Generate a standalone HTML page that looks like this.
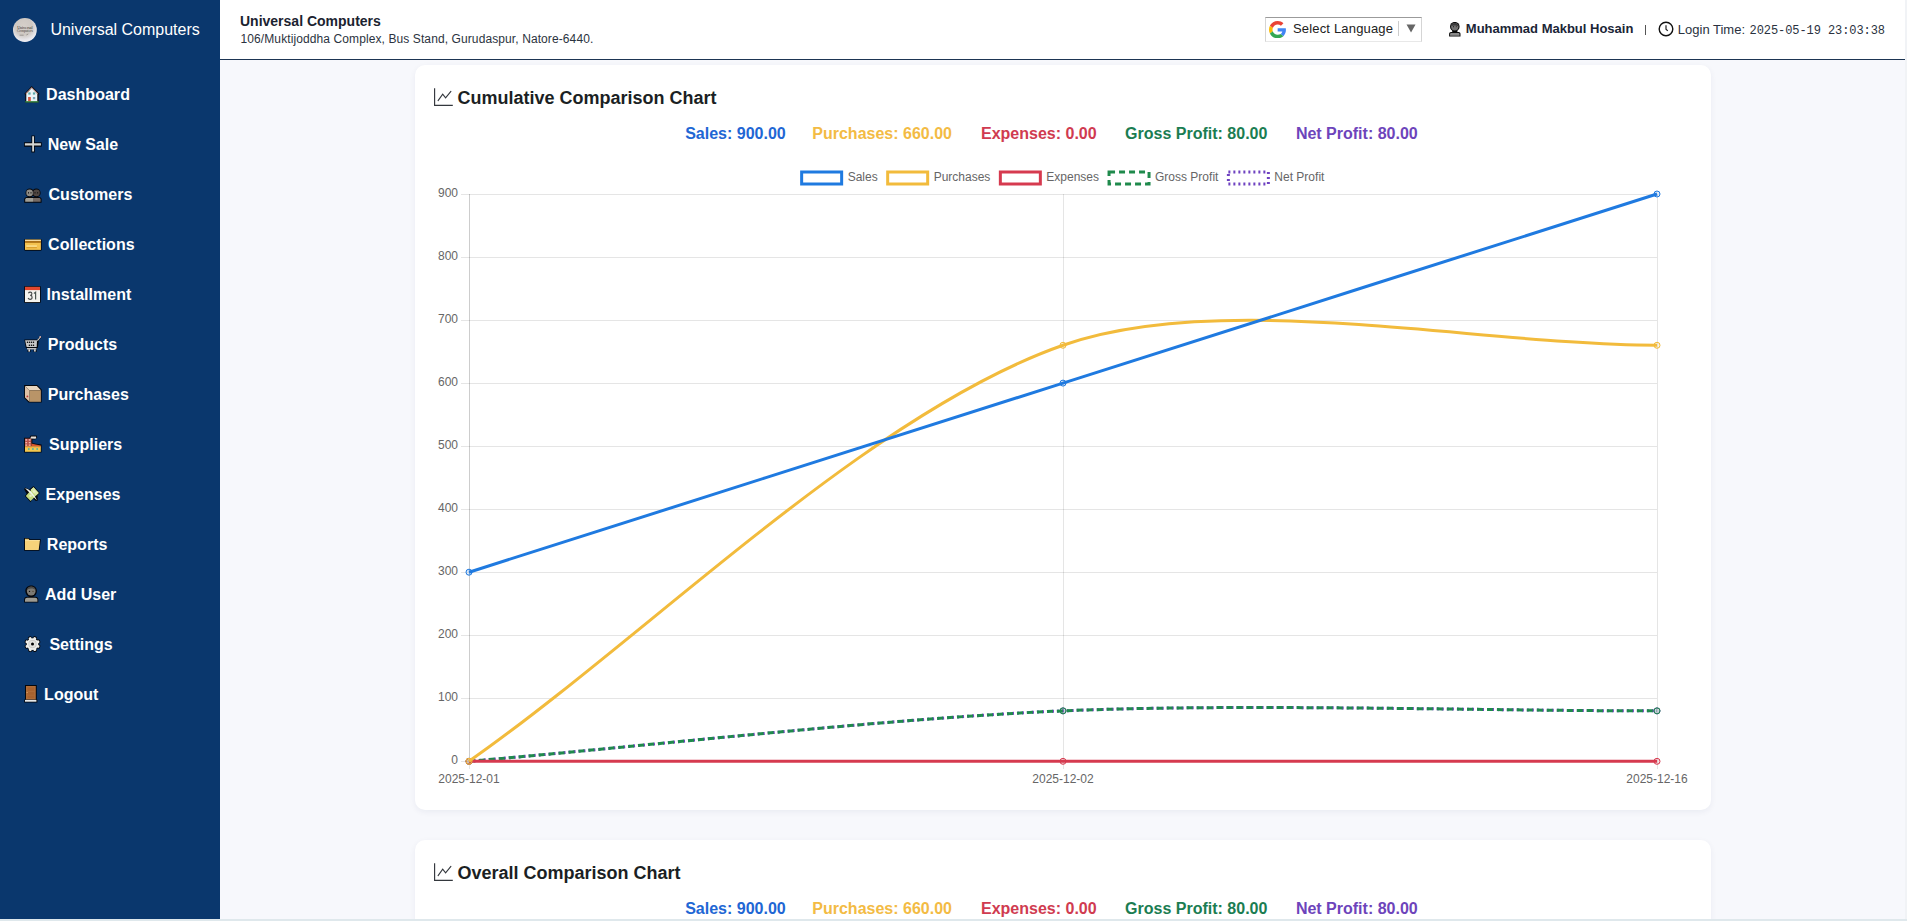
<!DOCTYPE html>
<html><head><meta charset="utf-8">
<style>
*{box-sizing:border-box;margin:0;padding:0}
html,body{width:1907px;height:921px;overflow:hidden;background:#f1f3f6;font-family:"Liberation Sans",sans-serif}
#page{position:absolute;left:0;top:0;width:1905px;height:919px;background:#f7f8fc;overflow:hidden}
#side{position:absolute;left:0;top:0;width:220px;height:919px;background:#0a376d}
.t{position:absolute;white-space:nowrap;line-height:1}
.nav{font-size:16px;font-weight:bold;color:#fff;letter-spacing:0.03px}
.ic{position:absolute}
#hdr{position:absolute;left:220px;top:0;width:1685px;height:59px;background:#fff}
#hline{position:absolute;left:220px;top:59px;width:1685px;height:1px;background:#1d3553}
.card{position:absolute;left:415px;width:1296px;background:#fff;border-radius:10px;box-shadow:0 2px 6px rgba(20,40,80,0.06)}
.stat{font-size:16px;font-weight:bold}
</style></head><body>
<div style="position:absolute;left:0;top:919px;width:1907px;height:2px;background:#dfe8ec"></div>
<div id="page">
<div id="side">
  <!-- logo -->
  <svg class="ic" style="left:12px;top:17px" width="26" height="26" viewBox="0 0 26 26">
<defs><radialGradient id="lg" cx="45%" cy="35%" r="65%"><stop offset="0" stop-color="#d6d0ca"/><stop offset="0.55" stop-color="#cec8c3"/><stop offset="0.85" stop-color="#e6e4e8"/><stop offset="1" stop-color="#f0f0f5"/></radialGradient></defs>
<circle cx="12.9" cy="13" r="11.9" fill="url(#lg)"/>
<text x="12.9" y="11.6" text-anchor="middle" font-family="Liberation Serif" font-size="4.6" fill="#2e2a26" textLength="15.5" lengthAdjust="spacingAndGlyphs">Universal</text>
<text x="12.9" y="14.6" text-anchor="middle" font-family="Liberation Serif" font-size="4" fill="#4a443e" textLength="16" lengthAdjust="spacingAndGlyphs">Computers</text>
<path d="M7.6 18.2h4M14.4 18l1.8-1" stroke="#6a645e" stroke-width="0.5"/>
</svg>
  <div class="t" style="left:50.4px;top:21.5px;font-size:16px;color:#fff">Universal Computers</div>

  <svg class="ic" style="left:20px;top:82px" width="25" height="25" viewBox="0 0 25 25"><path d="M4.2 11.9 L11.7 4.0 L19.6 11.9 L18.6 12.4 V20.5 H5.3 V12.4 Z" fill="#0b0b10"/>
<path d="M6.3 11.9 L11.7 6.1 L17.3 11.9 V19.4 H6.3 Z" fill="#eaf4f6"/>
<path d="M5.6 11.6 L11.7 5.2 L17.9 11.6 L17.3 11.9 L11.7 6.1 L6.3 11.9Z" fill="#f2b6a8"/>
<rect x="8.3" y="10.4" width="2.3" height="2.2" fill="#5ea9a8"/><rect x="12.9" y="10.4" width="2.3" height="2.2" fill="#5ea9a8"/><rect x="12.9" y="15" width="2.3" height="2.2" fill="#7aa6b9"/>
<rect x="8.1" y="15" width="2.7" height="4.4" fill="#d55640"/>
<rect x="5.3" y="19.2" width="13.3" height="1.3" fill="#3d8f44"/></svg>
<svg class="ic" style="left:20px;top:132px" width="25" height="25" viewBox="0 0 25 25"><path d="M11.4 3.5H14.8V10.2H21.7V14.8H14.8V20.4H11.4V14.8H4.1V10.2H11.4Z" fill="#05070c"/>
<path d="M12.2 4.3H14V11.2H20.9V13.6H14V19.6H12.2V13.6H4.9V11.2H12.2Z" fill="#d5d6d2"/></svg>
<svg class="ic" style="left:20px;top:182px" width="25" height="25" viewBox="0 0 25 25"><circle cx="9.8" cy="10.9" r="4.3" fill="#05070c"/><circle cx="16.3" cy="10.9" r="4.3" fill="#05070c"/>
<path d="M4.2 20.7V17.5C4.2 15.9 5.5 15 7 15H19C20.6 15 21.6 15.9 21.6 17.5V20.7Z" fill="#05070c"/>
<circle cx="9.6" cy="10.9" r="3.3" fill="#8f8c86"/><circle cx="16.5" cy="10.9" r="3.3" fill="#4f4642"/>
<rect x="8.2" y="10" width="0.8" height="1.6" fill="#111"/><rect x="10.6" y="10" width="0.8" height="1.6" fill="#111"/><rect x="14.6" y="10" width="0.8" height="1.6" fill="#111"/><rect x="17.3" y="10" width="0.8" height="1.6" fill="#111"/>
<path d="M5.2 19.8V17.6C5.2 16.6 5.9 15.9 7 15.9H13V19.8Z" fill="#a19f96"/><path d="M13 15.9H19C20 15.9 20.6 16.6 20.6 17.6V19.8H13Z" fill="#756a64"/></svg>
<svg class="ic" style="left:20px;top:232px" width="25" height="25" viewBox="0 0 25 25"><rect x="4.2" y="6.9" width="17.5" height="11.8" rx="1.2" fill="#05070c"/>
<rect x="5" y="7.7" width="15.9" height="10.2" fill="#f4c24f"/>
<rect x="5" y="7.7" width="15.9" height="1.4" fill="#f5d9a0"/>
<rect x="5" y="9.1" width="15.9" height="1.7" fill="#a66a12"/>
<rect x="6.4" y="13.4" width="10.5" height="1.3" fill="#fbe39a"/>
<rect x="6.4" y="15.2" width="10.5" height="1" fill="#d69a2a"/></svg>
<svg class="ic" style="left:20px;top:282px" width="25" height="25" viewBox="0 0 25 25"><rect x="4.2" y="4.1" width="16.6" height="16.8" rx="0.8" fill="#05070c"/>
<rect x="5" y="4.9" width="15" height="15.2" fill="#f4f3ee"/>
<rect x="5" y="4.9" width="15" height="3.2" fill="#e2472e"/>
<path d="M8.4 11.2C8.8 10.4 9.5 10.1 10.2 10.1C11.2 10.1 11.9 10.7 11.9 11.7C11.9 12.6 11.2 13.2 10.2 13.3C11.3 13.3 12.1 14 12.1 15.2C12.1 16.5 11.2 17.3 10.1 17.3C9.2 17.3 8.5 16.9 8.1 16.1" fill="none" stroke="#4b4d4c" stroke-width="1.15"/><path d="M13.9 11.4L15.6 10.1V17.6" fill="none" stroke="#4b5550" stroke-width="1.2"/></svg>
<svg class="ic" style="left:20px;top:332px" width="25" height="25" viewBox="0 0 25 25"><path d="M4.3 7.4H17.6L19.8 4.0L21.4 5.2L18.8 8.6L17.9 15.6L16.6 16.4V19.9H13.6V17.2H10.6V19.9H7.6V16.6L5.8 15.7Z" fill="#05070c"/>
<path d="M5.1 8.3H17.0L16.7 15.1H6.6Z" fill="#c9c9c9"/>
<path d="M17.0 8.3L19.9 4.9L20.6 5.4L17.8 8.9Z" fill="#d8d8d8"/>
<circle cx="20.2" cy="4.9" r="0.9" fill="#e8b6b0"/>
<rect x="7" y="16.1" width="9.4" height="1.3" fill="#d5d5d5"/><rect x="8.4" y="17.3" width="1.6" height="2.3" fill="#e4e4e4"/><rect x="14.1" y="17.3" width="1.6" height="2.3" fill="#e4e4e4"/>
<circle cx="7.5" cy="10.3" r="0.75" fill="#000"/><circle cx="9.5" cy="10.3" r="0.75" fill="#000"/><circle cx="11.5" cy="10.3" r="0.75" fill="#000"/><circle cx="13.5" cy="10.3" r="0.75" fill="#000"/>
<circle cx="9.4" cy="13.2" r="0.75" fill="#000"/><circle cx="11.5" cy="13.2" r="0.75" fill="#000"/><circle cx="13.5" cy="13.2" r="0.75" fill="#000"/></svg>
<svg class="ic" style="left:20px;top:382px" width="25" height="25" viewBox="0 0 25 25"><path d="M4.1 3.1H17.2L21.7 7.6V20.6H8.6L4.1 16.1Z" fill="#05070c"/>
<path d="M5 4H16.8L20.9 8.3H9.4Z" fill="#e9d6bf"/>
<path d="M9.4 8.3H20.9V19.8H9.4Z" fill="#b99468"/>
<path d="M5 4L9.4 8.3V19.8L5 15.6Z" fill="#dcc0a6"/>
<circle cx="7.4" cy="14.4" r="0.9" fill="#c0393a"/></svg>
<svg class="ic" style="left:20px;top:432px" width="25" height="25" viewBox="0 0 25 25"><path d="M4.1 5.8H9.6L10.6 3.6H16.6L17.2 5.6L15.2 7.6L12.4 7.4V11.1L16 11.7L21.6 12.6V20.6H4.1Z" fill="#05070c"/>
<rect x="5" y="6.6" width="6.4" height="8" fill="#b75048"/>
<rect x="5.4" y="7" width="1.7" height="1.8" fill="#e8a4a0"/><rect x="8.8" y="7" width="1.7" height="1.8" fill="#e8a4a0"/>
<rect x="5.4" y="10" width="1.7" height="1.3" fill="#f2b6aa"/><rect x="8.8" y="10" width="1.7" height="1.3" fill="#f2b6aa"/>
<rect x="5.4" y="12.4" width="1.7" height="1.4" fill="#f2b6aa"/><rect x="8.8" y="12.4" width="1.7" height="1.4" fill="#f2b6aa"/>
<path d="M10.2 6.6L11.2 4.4H16L16.2 6.0L15.4 6.7Z" fill="#e6e0da"/>
<path d="M11.4 11.6L15.6 12.6L20.8 13.6V14.6H11.4Z" fill="#d9582e"/>
<rect x="5" y="14.5" width="15.8" height="5.3" fill="#f3c750"/>
<rect x="5" y="14.5" width="15.8" height="1" fill="#f0a040"/>
<circle cx="8.8" cy="17" r="0.95" fill="#55b39e"/><circle cx="12.9" cy="17" r="0.95" fill="#55b39e"/><circle cx="17.2" cy="17" r="0.95" fill="#55b39e"/></svg>
<svg class="ic" style="left:20px;top:482px" width="25" height="25" viewBox="0 0 25 25"><path d="M13.5 4L19.8 11L17.5 13.2L17.8 18.6L15.8 19L12.8 16.6L10.6 20.2L4.8 14L6.7 12L4.1 7.2L5.2 5.5L9.2 7.4Z" fill="#05070c"/>
<path d="M13.5 5.2L18.7 10.9L10.6 19L5.8 14Z" fill="#c4da80"/>
<path d="M10.6 7.8L13.5 5.2L18.7 10.9L15.8 13.6Z" fill="#dbe9a6"/>
<path d="M5 6.2C7.5 6.5 9.6 7.8 11.6 10.2C13.4 12.4 15.2 14.8 17 18.2C15 16.6 13.3 14.6 11.2 12.3C9.1 10.1 7.3 8.4 5 6.2Z" fill="#f2f4ee"/>
<circle cx="14.2" cy="9.6" r="1.3" fill="#e9efc6"/><circle cx="10.6" cy="13.8" r="1.3" fill="#e9efc6"/></svg>
<svg class="ic" style="left:20px;top:532px" width="25" height="25" viewBox="0 0 25 25"><path d="M4.1 6.2C4.1 5.9 4.4 5.9 4.6 5.9H9L10 7.2H20.9L19.4 18.8H4.1Z" fill="#05070c"/>
<path d="M5 6.8H8.6L9.4 8H5Z" fill="#e8c877"/>
<path d="M5 8H19.9L18.7 18H5Z" fill="#f6d27a"/>
<rect x="5" y="8" width="14.8" height="0.8" fill="#fbe3a2"/></svg>
<svg class="ic" style="left:20px;top:582px" width="25" height="25" viewBox="0 0 25 25"><path d="M11.2 3.4C14.5 3.4 16.9 5.7 16.9 9C16.9 11.9 15.2 14.1 13 14.8H15.4C17.2 14.8 18.3 16.1 18.3 17.6V20.6H4.1V17.6C4.1 16.1 5.3 14.8 7 14.8H9.4C7.2 14.1 5.3 11.9 5.3 9C5.3 5.7 7.8 3.4 11.2 3.4Z" fill="#05070c"/>
<circle cx="11.2" cy="9.1" r="4.4" fill="#7d7a74"/>
<path d="M6.6 8.6C6.8 6 8.6 4.4 11.2 4.4C13.6 4.4 15.6 6 15.8 8.4C14.6 7.2 12.8 6.5 11 6.6C9.2 6.6 7.6 7.4 6.6 8.6Z" fill="#4a4845"/>
<circle cx="9.5" cy="9.4" r="0.7" fill="#111"/><circle cx="13" cy="9.4" r="0.7" fill="#5a4a36"/>
<path d="M5 19.8V17.7C5 16.5 5.9 15.7 7.1 15.7H15.3C16.5 15.7 17.4 16.5 17.4 17.7V19.8Z" fill="#9e9b92"/></svg>
<svg class="ic" style="left:20px;top:632px" width="25" height="25" viewBox="0 0 25 25"><rect x="10.5" y="3.9" width="4" height="4" rx="1.4" transform="rotate(22 12.5 12.1)" fill="#05070c"/><rect x="10.5" y="3.9" width="4" height="4" rx="1.4" transform="rotate(67 12.5 12.1)" fill="#05070c"/><rect x="10.5" y="3.9" width="4" height="4" rx="1.4" transform="rotate(112 12.5 12.1)" fill="#05070c"/><rect x="10.5" y="3.9" width="4" height="4" rx="1.4" transform="rotate(157 12.5 12.1)" fill="#05070c"/><rect x="10.5" y="3.9" width="4" height="4" rx="1.4" transform="rotate(202 12.5 12.1)" fill="#05070c"/><rect x="10.5" y="3.9" width="4" height="4" rx="1.4" transform="rotate(247 12.5 12.1)" fill="#05070c"/><rect x="10.5" y="3.9" width="4" height="4" rx="1.4" transform="rotate(292 12.5 12.1)" fill="#05070c"/><rect x="10.5" y="3.9" width="4" height="4" rx="1.4" transform="rotate(337 12.5 12.1)" fill="#05070c"/><circle cx="12.5" cy="12.1" r="6.7" fill="#05070c"/><rect x="11.1" y="4.8" width="2.8" height="3.4" rx="1" transform="rotate(22 12.5 12.1)" fill="#eeeeeb"/><rect x="11.1" y="4.8" width="2.8" height="3.4" rx="1" transform="rotate(67 12.5 12.1)" fill="#eeeeeb"/><rect x="11.1" y="4.8" width="2.8" height="3.4" rx="1" transform="rotate(112 12.5 12.1)" fill="#eeeeeb"/><rect x="11.1" y="4.8" width="2.8" height="3.4" rx="1" transform="rotate(157 12.5 12.1)" fill="#eeeeeb"/><rect x="11.1" y="4.8" width="2.8" height="3.4" rx="1" transform="rotate(202 12.5 12.1)" fill="#eeeeeb"/><rect x="11.1" y="4.8" width="2.8" height="3.4" rx="1" transform="rotate(247 12.5 12.1)" fill="#eeeeeb"/><rect x="11.1" y="4.8" width="2.8" height="3.4" rx="1" transform="rotate(292 12.5 12.1)" fill="#eeeeeb"/><rect x="11.1" y="4.8" width="2.8" height="3.4" rx="1" transform="rotate(337 12.5 12.1)" fill="#eeeeeb"/><circle cx="12.5" cy="12.1" r="5.8" fill="#eeeeeb"/>
<circle cx="12.5" cy="12.1" r="4.1" fill="#c8c7c3"/><circle cx="12.5" cy="12.1" r="3.3" fill="#e4e3df"/>
<circle cx="12.5" cy="12.1" r="1.5" fill="#000"/></svg>
<svg class="ic" style="left:20px;top:682px" width="25" height="25" viewBox="0 0 25 25"><path d="M5 3H16.8V17.4H17.4V20.6H4.2V17.4H5Z" fill="#05070c"/>
<rect x="6" y="4" width="9.8" height="13.5" fill="#b06c38"/>
<rect x="7.6" y="5.4" width="6.6" height="3.4" fill="#a8622f"/><rect x="7.6" y="10" width="6.6" height="2.8" fill="#a8622f"/><rect x="7.6" y="13.6" width="6.6" height="2.4" fill="#a8622f"/>
<circle cx="7.1" cy="10.5" r="0.6" fill="#e8b070"/>
<rect x="5" y="17.9" width="11.4" height="1.8" fill="#e8eaec"/></svg>
<div class="t nav" style="left:46.1px;top:86.5px">Dashboard</div>
  <div class="t nav" style="left:47.7px;top:136.5px">New Sale</div>
  <div class="t nav" style="left:48.5px;top:186.5px">Customers</div>
  <div class="t nav" style="left:48.1px;top:236.5px">Collections</div>
  <div class="t nav" style="left:46.6px;top:286.5px">Installment</div>
  <div class="t nav" style="left:47.7px;top:336.5px">Products</div>
  <div class="t nav" style="left:47.7px;top:386.5px">Purchases</div>
  <div class="t nav" style="left:49.1px;top:436.5px">Suppliers</div>
  <div class="t nav" style="left:45.6px;top:486.5px">Expenses</div>
  <div class="t nav" style="left:46.8px;top:536.5px">Reports</div>
  <div class="t nav" style="left:45px;top:586.5px">Add User</div>
  <div class="t nav" style="left:49.4px;top:636.5px">Settings</div>
  <div class="t nav" style="left:44.1px;top:686.5px">Logout</div>
</div>

<div id="hdr"></div>
<div id="hline"></div>
<div class="t" style="left:240px;top:13.65px;font-size:14px;font-weight:bold;color:#1b2330">Universal Computers</div>
<div class="t" style="left:240.5px;top:32.8px;font-size:12px;color:#2b3340;letter-spacing:0.1px">106/Muktijoddha Complex, Bus Stand, Gurudaspur, Natore-6440.</div>


<!-- google translate -->
<div style="position:absolute;left:1265px;top:17px;width:157px;height:25px;background:#fff;border-left:1px solid #d5d5d5;border-top:1px solid #9b9b9b;border-bottom:1px solid #e8e8e8;border-right:1px solid #d5d5d5"></div>
<svg class="ic" style="left:1269px;top:21px" width="17.3" height="17.3" viewBox="0 0 48 48"><path fill="#EA4335" d="M24 9.5c3.54 0 6.71 1.22 9.21 3.6l6.85-6.85C35.9 2.38 30.47 0 24 0 14.62 0 6.51 5.38 2.56 13.22l7.98 6.19C12.43 13.72 17.74 9.5 24 9.5z"/><path fill="#4285F4" d="M46.98 24.55c0-1.57-.15-3.09-.38-4.55H24v9.02h12.94c-.58 2.96-2.26 5.48-4.78 7.18l7.73 6c4.51-4.18 7.09-10.36 7.09-17.65z"/><path fill="#FBBC05" d="M10.53 28.59c-.48-1.45-.76-2.99-.76-4.59s.27-3.14.76-4.59l-7.98-6.19C.92 16.46 0 20.12 0 24c0 3.88.92 7.54 2.56 10.78l7.97-6.19z"/><path fill="#34A853" d="M24 48c6.48 0 11.93-2.13 15.89-5.81l-7.73-6c-2.15 1.45-4.92 2.3-8.16 2.3-6.26 0-11.57-4.22-13.47-9.91l-7.98 6.19C6.51 42.62 14.62 48 24 48z"/></svg>
<div class="t" style="left:1293px;top:21.5px;font-size:13px;color:#222;letter-spacing:0.17px">Select Language</div>
<div style="position:absolute;left:1398px;top:21px;width:1px;height:15px;background:#ccc"></div>
<svg class="ic" style="left:1405.5px;top:24px" width="10" height="9" viewBox="0 0 10 9"><path d="M0.5 0.5H9.5L5 8.5Z" fill="#666"/></svg>
<!-- user -->
<svg class="ic" style="left:1449px;top:22px" width="12" height="15" viewBox="0 0 12 15"><rect x="3.2" y="8" width="5.2" height="3" fill="#0a0a0a"/><circle cx="5.8" cy="4.7" r="4.8" fill="#0a0a0a"/><circle cx="5.8" cy="4.7" r="3.7" fill="#727272"/><path d="M2.2 4.2C2.4 2.2 4 1.1 5.8 1.1C7.7 1.1 9.2 2.2 9.4 4.2C8.2 3.1 3.4 3.1 2.2 4.2Z" fill="#3a3a3a"/><rect x="4.2" y="4" width="0.7" height="1.3" fill="#111"/><rect x="6.9" y="4" width="0.8" height="1.2" fill="#3b2f2a"/><path d="M0.1 14.6V12C0.1 10.9 0.9 10.1 2 10.1H9.6C10.7 10.1 11.5 10.9 11.5 12V14.6Z" fill="#0a0a0a"/><path d="M1.1 13.7V12.2C1.1 11.5 1.6 11 2.3 11H9.3C10 11 10.5 11.5 10.5 12.2V13.7Z" fill="#8a8a8a"/></svg>
<div class="t" style="left:1465.8px;top:22.45px;font-size:13px;font-weight:bold;color:#1b2536">Muhammad Makbul Hosain</div>
<div style="position:absolute;left:1644.6px;top:25px;width:1px;height:10px;background:#555"></div>
<svg class="ic" style="left:1658px;top:21.3px" width="16" height="16" viewBox="0 0 16 16"><circle cx="8" cy="8" r="6.8" fill="#fff" stroke="#111" stroke-width="1.4"/><path d="M8 4.2V8.3L9.8 9.9" fill="none" stroke="#222" stroke-width="1.2"/></svg>
<div class="t" style="left:1677.8px;top:22.9px;font-size:13px;color:#2a3240">Login Time: </div>
<div class="t" style="left:1749.5px;top:24.7px;font-size:12px;font-family:'Liberation Mono',monospace;color:#2a3240;letter-spacing:-0.07px">2025-05-19 23:03:38</div>

<div class="card" style="top:65px;height:745px"></div>
<div class="card" style="top:840px;height:200px"></div>

<svg class="ic" style="left:430px;top:85px" width="26" height="24" viewBox="0 0 26 24"><path d="M4.6 3.2V20.4H22.8" fill="none" stroke="#33373d" stroke-width="1.15"/><path d="M8.1 15.6L12.7 9.1L15.6 12.9L20.9 6.4" fill="none" stroke="#33373d" stroke-width="1.1" stroke-linecap="round" stroke-linejoin="miter"/></svg>
<div class="t" style="left:457.4px;top:88.8px;font-size:18px;font-weight:bold;color:#1b1f24">Cumulative Comparison Chart</div>
<div class="t stat" style="left:685.2px;top:125.9px;color:#2166d4">Sales: 900.00</div>
<div class="t stat" style="left:812.3px;top:125.9px;color:#f3bb44">Purchases: 660.00</div>
<div class="t stat" style="left:981px;top:125.9px;color:#d03b50">Expenses: 0.00</div>
<div class="t stat" style="left:1125.1px;top:125.9px;color:#1b7d52">Gross Profit: 80.00</div>
<div class="t stat" style="left:1295.9px;top:125.9px;color:#6d44bb">Net Profit: 80.00</div>
<svg id="chart" style="position:absolute;left:0;top:0" width="1905" height="919" viewBox="0 0 1905 919">
<path d="M461 761.5 H1657 M461 698.5 H1657 M461 635.5 H1657 M461 572.5 H1657 M461 509.5 H1657 M461 446.5 H1657 M461 383.5 H1657 M461 320.5 H1657 M461 257.5 H1657 M461 194.5 H1657 M469.5 194 V769 M1063.5 194 V769 M1657.5 194 V769" stroke="rgba(0,0,0,0.1)" stroke-width="1" fill="none"/>
<path d="M469.5 194 V761" stroke="rgba(0,0,0,0.1)" stroke-width="1" fill="none"/>
<text x="458" y="764.30" text-anchor="end" font-size="12" fill="#666">0</text>
<text x="458" y="701.27" text-anchor="end" font-size="12" fill="#666">100</text>
<text x="458" y="638.23" text-anchor="end" font-size="12" fill="#666">200</text>
<text x="458" y="575.20" text-anchor="end" font-size="12" fill="#666">300</text>
<text x="458" y="512.17" text-anchor="end" font-size="12" fill="#666">400</text>
<text x="458" y="449.13" text-anchor="end" font-size="12" fill="#666">500</text>
<text x="458" y="386.10" text-anchor="end" font-size="12" fill="#666">600</text>
<text x="458" y="323.07" text-anchor="end" font-size="12" fill="#666">700</text>
<text x="458" y="260.03" text-anchor="end" font-size="12" fill="#666">800</text>
<text x="458" y="197.00" text-anchor="end" font-size="12" fill="#666">900</text>
<text x="469" y="783" text-anchor="middle" font-size="12" fill="#666">2025-12-01</text>
<text x="1063" y="783" text-anchor="middle" font-size="12" fill="#666">2025-12-02</text>
<text x="1657" y="783" text-anchor="middle" font-size="12" fill="#666">2025-12-16</text>
<path d="M469.00 761.30 C647.20 746.17 884.48 718.45 1063.00 710.87 C1240.88 703.32 1478.80 710.87 1657.00 710.87" stroke="#6f42c1" stroke-width="3" fill="none" stroke-dasharray="2 3"/>
<circle cx="469.0" cy="761.30" r="3" fill="#6f42c1" fill-opacity="0.15" stroke="#6f42c1" stroke-width="1"/>
<circle cx="1063.0" cy="710.87" r="3" fill="#6f42c1" fill-opacity="0.15" stroke="#6f42c1" stroke-width="1"/>
<circle cx="1657.0" cy="710.87" r="3" fill="#6f42c1" fill-opacity="0.15" stroke="#6f42c1" stroke-width="1"/>
<path d="M469.00 761.30 C647.20 746.17 884.48 718.45 1063.00 710.87 C1240.88 703.32 1478.80 710.87 1657.00 710.87" stroke="#1f8a4c" stroke-width="3" fill="none" stroke-dasharray="6 4"/>
<circle cx="469.0" cy="761.30" r="3" fill="#1f8a4c" fill-opacity="0.15" stroke="#1f8a4c" stroke-width="1"/>
<circle cx="1063.0" cy="710.87" r="3" fill="#1f8a4c" fill-opacity="0.15" stroke="#1f8a4c" stroke-width="1"/>
<circle cx="1657.0" cy="710.87" r="3" fill="#1f8a4c" fill-opacity="0.15" stroke="#1f8a4c" stroke-width="1"/>
<path d="M469.00 761.30 C647.20 761.30 884.80 761.30 1063.00 761.30 C1241.20 761.30 1478.80 761.30 1657.00 761.30" stroke="#d63a4f" stroke-width="3" fill="none"/>
<circle cx="469.0" cy="761.30" r="3" fill="#d63a4f" fill-opacity="0.15" stroke="#d63a4f" stroke-width="1"/>
<circle cx="1063.0" cy="761.30" r="3" fill="#d63a4f" fill-opacity="0.15" stroke="#d63a4f" stroke-width="1"/>
<circle cx="1657.0" cy="761.30" r="3" fill="#d63a4f" fill-opacity="0.15" stroke="#d63a4f" stroke-width="1"/>
<path d="M469.00 761.30 C647.20 636.49 867.08 413.89 1063.00 345.28 C1223.48 289.08 1478.80 345.28 1657.00 345.28" stroke="#f2bb3c" stroke-width="3" fill="none"/>
<circle cx="469.0" cy="761.30" r="3" fill="#f2bb3c" fill-opacity="0.15" stroke="#f2bb3c" stroke-width="1"/>
<circle cx="1063.0" cy="345.28" r="3" fill="#f2bb3c" fill-opacity="0.15" stroke="#f2bb3c" stroke-width="1"/>
<circle cx="1657.0" cy="345.28" r="3" fill="#f2bb3c" fill-opacity="0.15" stroke="#f2bb3c" stroke-width="1"/>
<path d="M469.00 572.20 C647.20 515.47 884.80 439.83 1063.00 383.10 C1241.20 326.37 1478.80 250.73 1657.00 194.00" stroke="#1f7ae0" stroke-width="3" fill="none"/>
<circle cx="469.0" cy="572.20" r="3" fill="#1f7ae0" fill-opacity="0.15" stroke="#1f7ae0" stroke-width="1"/>
<circle cx="1063.0" cy="383.10" r="3" fill="#1f7ae0" fill-opacity="0.15" stroke="#1f7ae0" stroke-width="1"/>
<circle cx="1657.0" cy="194.00" r="3" fill="#1f7ae0" fill-opacity="0.15" stroke="#1f7ae0" stroke-width="1"/>
<rect x="801.65" y="172" width="40" height="12" fill="rgba(255,255,255,0)" stroke="#1f7ae0" stroke-width="3"/>
<text x="847.65" y="180.8" font-size="12" fill="#666">Sales</text>
<rect x="887.67" y="172" width="40" height="12" fill="rgba(255,255,255,0)" stroke="#f2bb3c" stroke-width="3"/>
<text x="933.67" y="180.8" font-size="12" fill="#666">Purchases</text>
<rect x="1000.35" y="172" width="40" height="12" fill="rgba(255,255,255,0)" stroke="#d63a4f" stroke-width="3"/>
<text x="1046.35" y="180.8" font-size="12" fill="#666">Expenses</text>
<rect x="1109.04" y="172" width="40" height="12" fill="rgba(255,255,255,0)" stroke="#1f8a4c" stroke-width="3" stroke-dasharray="6 4"/>
<text x="1155.04" y="180.8" font-size="12" fill="#666">Gross Profit</text>
<rect x="1228.37" y="172" width="40" height="12" fill="rgba(255,255,255,0)" stroke="#6f42c1" stroke-width="3" stroke-dasharray="2 3"/>
<text x="1274.37" y="180.8" font-size="12" fill="#666">Net Profit</text>
</svg>
<svg class="ic" style="left:430px;top:860px" width="26" height="24" viewBox="0 0 26 24"><path d="M4.6 3.2V20.4H22.8" fill="none" stroke="#33373d" stroke-width="1.15"/><path d="M8.1 15.6L12.7 9.1L15.6 12.9L20.9 6.4" fill="none" stroke="#33373d" stroke-width="1.1" stroke-linecap="round" stroke-linejoin="miter"/></svg>
<div class="t" style="left:457.4px;top:863.8px;font-size:18px;font-weight:bold;color:#1b1f24">Overall Comparison Chart</div>
<div class="t stat" style="left:685.2px;top:900.9px;color:#2166d4">Sales: 900.00</div>
<div class="t stat" style="left:812.3px;top:900.9px;color:#f3bb44">Purchases: 660.00</div>
<div class="t stat" style="left:981px;top:900.9px;color:#d03b50">Expenses: 0.00</div>
<div class="t stat" style="left:1125.1px;top:900.9px;color:#1b7d52">Gross Profit: 80.00</div>
<div class="t stat" style="left:1295.9px;top:900.9px;color:#6d44bb">Net Profit: 80.00</div>


</div>
</body></html>
